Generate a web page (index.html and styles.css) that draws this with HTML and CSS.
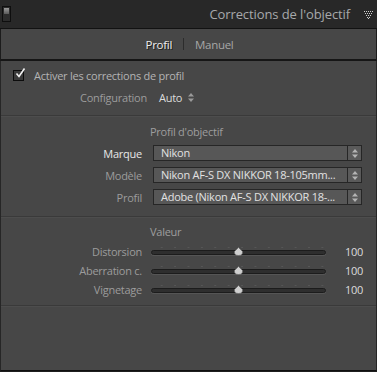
FILE: index.html
```html
<!DOCTYPE html>
<html lang="fr">
<head>
<meta charset="utf-8">
<link rel="stylesheet" href="styles.css">
</head>
<body>
<div class="panel">
  <header class="head">
    <span class="toggle"><span class="toggle-top"></span></span>
    <span class="title">Corrections de l'objectif</span>
    <svg class="tri" width="9" height="8" viewBox="0 0 9 8">
      <g fill="#cfcfcf">
        <rect x="0" y="0" width="1" height="1"/><rect x="2" y="0" width="1" height="1"/><rect x="4" y="0" width="1" height="1"/><rect x="6" y="0" width="1" height="1"/><rect x="8" y="0" width="1" height="1"/>
        <rect x="1" y="2" width="1" height="1"/><rect x="3" y="2" width="1" height="1"/><rect x="5" y="2" width="1" height="1"/><rect x="7" y="2" width="1" height="1"/>
        <rect x="2" y="4" width="1" height="1"/><rect x="4" y="4" width="1" height="1"/><rect x="6" y="4" width="1" height="1"/>
        <rect x="3" y="6" width="1" height="1"/><rect x="5" y="6" width="1" height="1"/>
        <rect x="4" y="7" width="1" height="1"/>
      </g>
    </svg>
  </header>

  <nav class="tabs">
    <span class="tab active">Profil</span>
    <span class="tab-sep"></span>
    <span class="tab">Manuel</span>
  </nav>

  <main class="body">
    <div class="check-row">
      <span class="checkbox">
        <svg class="check" width="12" height="12" viewBox="0 0 12 12"><path d="M2.5 6.5 L5 9.5 L10.5 1.5" fill="none" stroke="#f2f2f2" stroke-width="1.6"/></svg>
      </span>
      <span class="check-label">Activer les corrections de profil</span>
    </div>
    <div class="config-row">
      <span class="label config-label">Configuration</span>
      <span class="config-value">Auto</span>
      <svg class="updown" width="6" height="9" viewBox="0 0 6 9"><path d="M3 0 L6 3.5 H0 Z M3 9 L6 5.5 H0 Z" fill="#9a9a9a"/></svg>
    </div>

    <div class="sep"></div>

    <div class="section-title">Profil d'objectif</div>
    <div class="field-row">
      <span class="label bright">Marque</span>
      <div class="select">
        <span class="select-text">Nikon</span>
        <span class="select-arrows"><svg width="6" height="9" viewBox="0 0 6 9"><path d="M3 0 L6 3.5 H0 Z M3 9 L6 5.5 H0 Z" fill="#b4b4b4"/></svg></span>
      </div>
    </div>
    <div class="field-row">
      <span class="label">Modèle</span>
      <div class="select">
        <span class="select-text">Nikon AF-S DX NIKKOR 18-105mm...</span>
        <span class="select-arrows"><svg width="6" height="9" viewBox="0 0 6 9"><path d="M3 0 L6 3.5 H0 Z M3 9 L6 5.5 H0 Z" fill="#b4b4b4"/></svg></span>
      </div>
    </div>
    <div class="field-row">
      <span class="label">Profil</span>
      <div class="select">
        <span class="select-text">Adobe (Nikon AF-S DX NIKKOR 18-...</span>
        <span class="select-arrows"><svg width="6" height="9" viewBox="0 0 6 9"><path d="M3 0 L6 3.5 H0 Z M3 9 L6 5.5 H0 Z" fill="#b4b4b4"/></svg></span>
      </div>
    </div>

    <div class="sep sep2"></div>

    <div class="section-title value-title">Valeur</div>
    <div class="slider-row">
      <span class="label">Distorsion</span>
      <div class="slider"><div class="track"></div><svg class="thumb" width="11" height="9" viewBox="0 0 11 9"><path d="M5.5 0.5 L9.5 4.5 Q10 8.5 5.5 8.5 Q1 8.5 1.5 4.5 Z" fill="#cfcfcf" stroke="#6a6a6a" stroke-width="0.8"/></svg></div>
      <span class="value">100</span>
    </div>
    <div class="slider-row">
      <span class="label">Aberration c.</span>
      <div class="slider"><div class="track"></div><svg class="thumb" width="11" height="9" viewBox="0 0 11 9"><path d="M5.5 0.5 L9.5 4.5 Q10 8.5 5.5 8.5 Q1 8.5 1.5 4.5 Z" fill="#cfcfcf" stroke="#6a6a6a" stroke-width="0.8"/></svg></div>
      <span class="value">100</span>
    </div>
    <div class="slider-row">
      <span class="label">Vignetage</span>
      <div class="slider"><div class="track"></div><svg class="thumb" width="11" height="9" viewBox="0 0 11 9"><path d="M5.5 0.5 L9.5 4.5 Q10 8.5 5.5 8.5 Q1 8.5 1.5 4.5 Z" fill="#cfcfcf" stroke="#6a6a6a" stroke-width="0.8"/></svg></div>
      <span class="value">100</span>
    </div>

    <div class="sep sep3"></div>
  </main>
</div>
</body>
</html>
```
FILE: styles.css
```css
* { box-sizing: border-box; }
html, body { margin: 0; padding: 0; }
body {
  background: #1e1e1e;
  font-family: "Open Sans", "Noto Sans", sans-serif;
  font-size: 11px;
  letter-spacing: -0.25px;
  color: #a9a9a9;
  width: 377px;
  height: 372px;
  overflow: hidden;
}
.panel { width: 377px; }

.head {
  height: 29px;
  background: #282828;
  border-bottom: 1px solid #121212;
  display: flex;
  align-items: center;
  padding: 0 3px 0 2px;
}
.toggle {
  width: 9px;
  height: 16px;
  background: #2c2c2c;
  border: 1px solid #0e0e0e;
  display: flex;
  flex-direction: column;
  padding: 1px;
}
.toggle-top {
  height: 6px;
  background: linear-gradient(#9a9a9a, #5a5a5a);
}
.title {
  margin-left: auto;
  font-size: 13px;
  letter-spacing: -0.1px;
  color: #a7a9ab;
}
.tri { margin-left: 14px; margin-right: 1px; margin-top: 1px; }

.tabs {
  height: 32px;
  background: #474747;
  border-left: 1px solid #1c1c1c;
  border-right: 1px solid #1c1c1c;
  border-bottom: 2px solid #161616;
  display: flex;
  align-items: center;
  justify-content: center;
  padding-left: 2px;
}
.tab { font-size: 11.5px; letter-spacing: -0.3px; color: #a6a6a6; }
.tab.active { color: #ececec; text-shadow: 1px 1px 0 #1e1e1e; }
.tab-sep {
  width: 1px;
  height: 12px;
  background: #2c2c2c;
  margin: 0 11px 0 11px;
}

.body {
  height: 310px;
  background: #474747;
  border-left: 1px solid #262626;
  border-right: 1px solid #262626;
  border-bottom: 1px solid #101010;
  padding-top: 6px;
}

.check-row {
  height: 16px;
  display: flex;
  align-items: center;
  padding-left: 12px;
}
.checkbox {
  width: 11px;
  height: 11px;
  border: 1px solid #0c0c0c;
  background: #3a3a3a;
  position: relative;
}
.check { position: absolute; left: 0px; top: -4px; }
.check-label { margin-left: 10px; color: #b4b4b4; }

.config-row {
  height: 16px;
  margin-top: 6px;
  display: flex;
  align-items: center;
}
.label {
  width: 141px;
  flex: none;
  text-align: right;
  color: #9c9c9c;
}
.config-label { width: 146px; }
.config-value { margin-left: 12px; color: #dcdcdc; }
.updown { margin-left: 6px; }

.sep {
  height: 1px;
  background: #3a3a3a;
  margin-top: 10px;
  box-shadow: 0 1px 0 #4d4d4d;
}

.section-title {
  height: 16px;
  margin-top: 8px;
  line-height: 16px;
  padding-left: 149px;
  color: #9e9e9e;
}

.field-row {
  height: 16px;
  margin-top: 6px;
  display: flex;
  align-items: center;
}
.section-title + .field-row { margin-top: 5px; }
.label.bright { color: #e6e6e6; }
.select {
  margin-left: 11px;
  width: 209px;
  height: 16px;
  display: flex;
  border: 1px solid #262626;
  background: #575757;
}
.select-text {
  flex: 1;
  padding-left: 7px;
  color: #e2e2e2;
  line-height: 14px;
  white-space: nowrap;
  overflow: hidden;
}
.select-arrows {
  width: 14px;
  flex: none;
  border-left: 1px solid #262626;
  background: #5a5a5a;
  display: flex;
  align-items: center;
  justify-content: center;
}

.sep2 { margin-top: 11px; }
.value-title { margin-top: 7px; }

.slider-row {
  height: 16px;
  margin-top: 3px;
  display: flex;
  align-items: center;
}
.slider {
  margin-left: 9px;
  width: 175px;
  height: 16px;
  position: relative;
  background-image: radial-gradient(circle, #565656 0.7px, transparent 0.9px);
  background-size: 13.4px 3px;
  background-position: 4px 3px;
  background-repeat: repeat-x;
}
.track {
  position: absolute;
  left: 0;
  right: 0;
  top: 7px;
  height: 5px;
  border-radius: 3px;
  background: #2e2e2e;
  border: 1px solid #1c1c1c;
  box-shadow: 0 1px 0 #555;
}
.thumb { position: absolute; left: 82px; top: 4px; }
.value {
  margin-left: auto;
  margin-right: 13px;
  color: #dcdcdc;
}

.sep3 { margin-top: 8px; }
```
